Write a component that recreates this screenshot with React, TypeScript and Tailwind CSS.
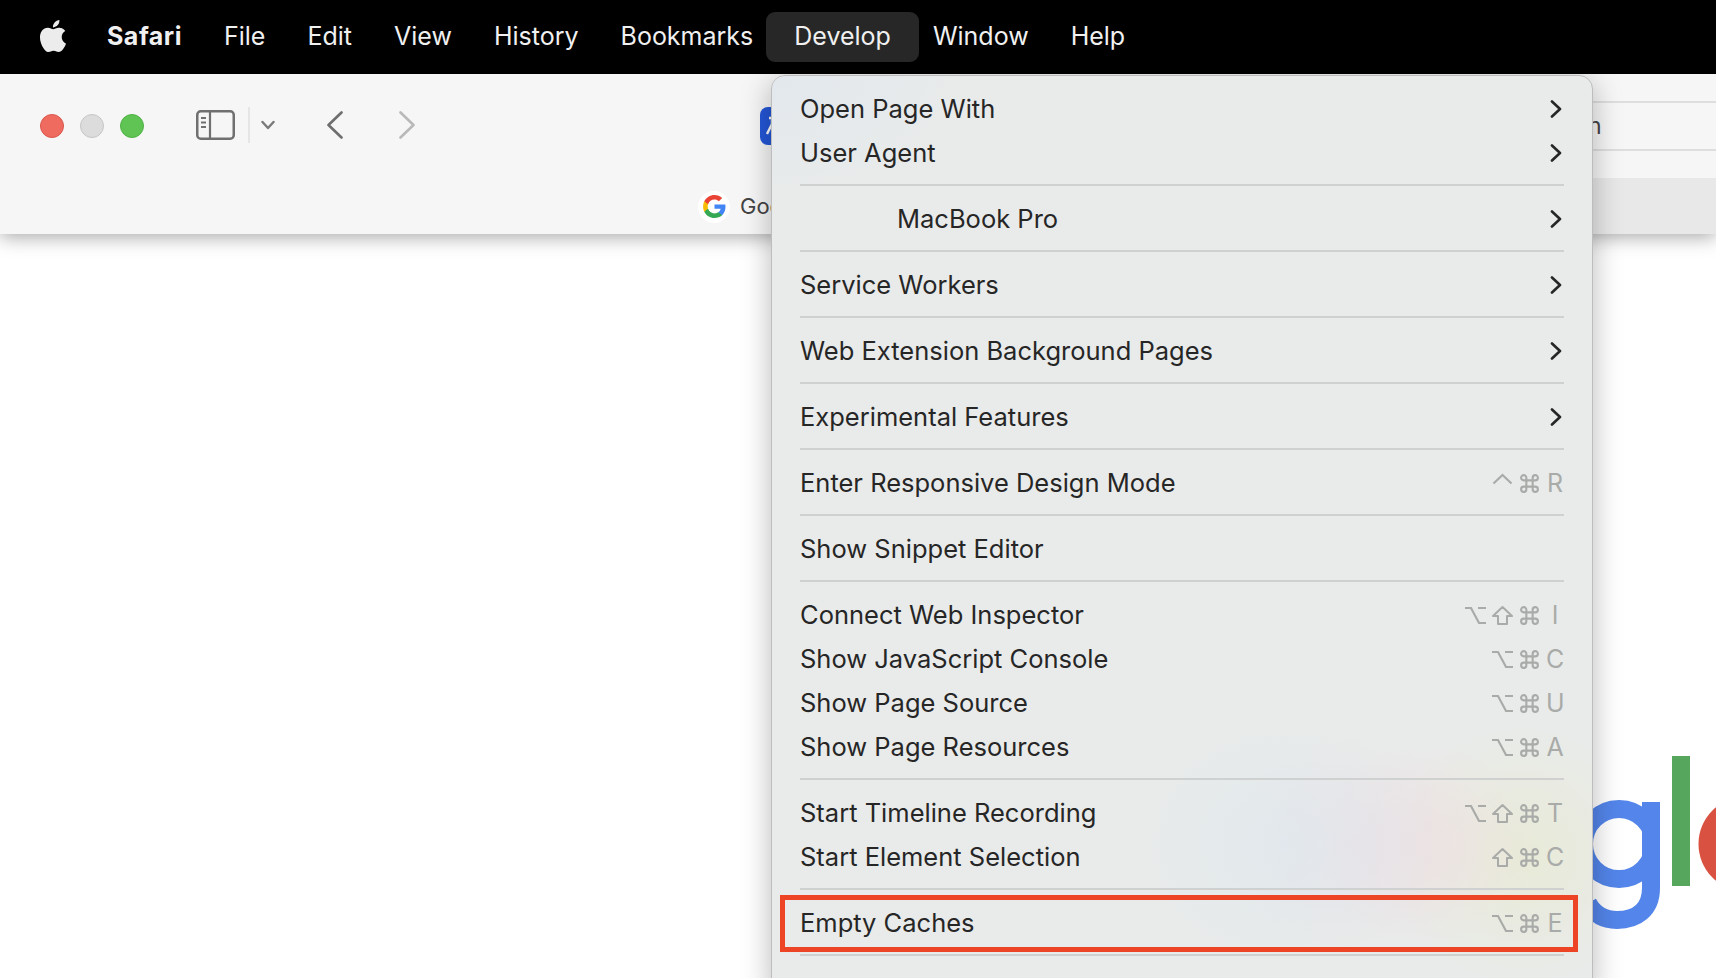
import React from "react";
import { SiApple } from "react-icons/si";

const Cmd = () => (
  <svg viewBox="0 0 20 20" className="w-[21px] h-[21px]" fill="none" stroke="currentColor" strokeWidth="2">
    <path d="M7 7H4.5A2.5 2.5 0 1 1 7 4.5V15.5A2.5 2.5 0 1 1 4.5 13H15.5A2.5 2.5 0 1 1 13 15.5V4.5A2.5 2.5 0 1 1 15.5 7H7Z" />
  </svg>
);
const Opt = () => (
  <svg viewBox="0 0 21 20" className="w-[21px] h-[21px]" fill="none" stroke="currentColor" strokeWidth="2.2">
    <path d="M0 2.5H6L14 17.5H21M13 2.5H21" />
  </svg>
);
const Shift = () => (
  <svg viewBox="0 0 21 20" className="w-[21px] h-[21px]" fill="none" stroke="currentColor" strokeWidth="2" strokeLinejoin="round">
    <path d="M10.5 1.5L20 10.5H15V18.5H6V10.5H1Z" />
  </svg>
);
const Ctrl = () => (
  <svg viewBox="0 0 21 20" className="w-[21px] h-[21px]" fill="none" stroke="currentColor" strokeWidth="2.2">
    <path d="M1.5 10L10.5 1.5L19.5 10" />
  </svg>
);
const Chevron = () => (
  <svg viewBox="0 0 12 18" className="w-[12px] h-[18px]" fill="none" stroke="#262626" strokeWidth="2.6" strokeLinecap="round" strokeLinejoin="round">
    <path d="M2 1.5L10 9L2 16.5" />
  </svg>
);

const ICONS: Record<string, () => React.ReactElement> = { c: Ctrl, o: Opt, s: Shift, m: Cmd };

type Row = { t: string; sub?: boolean; keys?: string; letter?: string; indent?: boolean; sep?: boolean };
const rows: Row[] = [
  { t: "Open Page With", sub: true },
  { t: "User Agent", sub: true },
  { t: "", sep: true },
  { t: "MacBook Pro", sub: true, indent: true },
  { t: "", sep: true },
  { t: "Service Workers", sub: true },
  { t: "", sep: true },
  { t: "Web Extension Background Pages", sub: true },
  { t: "", sep: true },
  { t: "Experimental Features", sub: true },
  { t: "", sep: true },
  { t: "Enter Responsive Design Mode", keys: "cm", letter: "R" },
  { t: "", sep: true },
  { t: "Show Snippet Editor" },
  { t: "", sep: true },
  { t: "Connect Web Inspector", keys: "osm", letter: "I" },
  { t: "Show JavaScript Console", keys: "om", letter: "C" },
  { t: "Show Page Source", keys: "om", letter: "U" },
  { t: "Show Page Resources", keys: "om", letter: "A" },
  { t: "", sep: true },
  { t: "Start Timeline Recording", keys: "osm", letter: "T" },
  { t: "Start Element Selection", keys: "sm", letter: "C" },
  { t: "", sep: true },
  { t: "Empty Caches", keys: "om", letter: "E" },
  { t: "", sep: true },
];

const bar = ["File", "Edit", "View", "History", "Bookmarks"];

function GoogleG() {
  return (
    <svg viewBox="0 0 24 24" className="w-[25px] h-[25px]">
      <path fill="#4285F4" d="M22.56 12.25c0-.78-.07-1.53-.2-2.25H12v4.26h5.92c-.26 1.37-1.04 2.53-2.21 3.31v2.77h3.57c2.08-1.92 3.28-4.74 3.28-8.09z" />
      <path fill="#34A853" d="M12 23c2.97 0 5.46-.98 7.28-2.66l-3.57-2.77c-.98.66-2.23 1.06-3.71 1.06-2.86 0-5.29-1.93-6.16-4.53H2.18v2.84C3.99 20.53 7.7 23 12 23z" />
      <path fill="#FBBC05" d="M5.84 14.09c-.22-.66-.35-1.36-.35-2.09s.13-1.43.35-2.09V7.07H2.18C1.43 8.55 1 10.22 1 12s.43 3.45 1.18 4.93l2.85-2.22.81-.62z" />
      <path fill="#EA4335" d="M12 5.38c1.62 0 3.06.56 4.21 1.64l3.15-3.15C17.45 2.09 14.97 1 12 1 7.7 1 3.99 3.47 2.18 7.07l3.66 2.84c.87-2.6 3.3-4.53 6.16-4.53z" />
    </svg>
  );
}

export default function App() {
  return (
    <div className="relative w-[1716px] h-[978px] overflow-hidden bg-white flex flex-col font-['Inter',sans-serif]">
      {/* macOS menu bar */}
      <div className="relative z-30 h-[74px] shrink-0 bg-black flex items-center text-[#f0f0f0] text-[25px]">
        <SiApple className="ml-[37px] w-[32px] h-[32px] mb-[2px] text-[#ececec]" />
        <span className="ml-[38px] font-bold tracking-[0.5px]">Safari</span>
        <div className="ml-[42px] flex gap-[42px]">
          {bar.map((b) => (
            <span key={b}>{b}</span>
          ))}
        </div>
        <div className="ml-[13px] h-[50px] px-[28px] rounded-[9px] bg-[#272727] flex items-center">Develop</div>
        <span className="ml-[14px]">Window</span>
        <span className="ml-[42px]">Help</span>
      </div>

      {/* Safari toolbar */}
      <div className="relative z-10 h-[160px] shrink-0 bg-[#f6f6f6] shadow-[0_3px_18px_rgba(0,0,0,0.35)] flex flex-col">
        <div className="h-[104px] flex items-center">
          <div className="ml-[40px] flex gap-[16px]">
            <div className="w-[24px] h-[24px] rounded-full bg-[#ef6b60] border border-[#d9564b]" />
            <div className="w-[24px] h-[24px] rounded-full bg-[#dcdcdc] border border-[#c6c6c6]" />
            <div className="w-[24px] h-[24px] rounded-full bg-[#5fc454] border border-[#4fb245]" />
          </div>
          <svg viewBox="0 0 39 30" className="ml-[52px] mb-[2px] w-[39px] h-[30px]" fill="none" stroke="#707070">
            <rect x="1.25" y="1.25" width="36.5" height="27.5" rx="3.5" strokeWidth="2.5" />
            <path d="M14 1.5V28.5" strokeWidth="2.2" />
            <path d="M5 8H10M5 12.5H10M5 17H10" strokeWidth="1.8" />
          </svg>
          <div className="ml-[13px] mb-[2px] w-[2px] h-[36px] bg-[#e6e6e6]" />
          <svg viewBox="0 0 14 10" className="ml-[11px] mb-[2px] w-[14px] h-[10px]" fill="none" stroke="#7a7a7a" strokeWidth="2.4" strokeLinecap="round" strokeLinejoin="round">
            <path d="M1.5 2L7 8L12.5 2" />
          </svg>
          <svg viewBox="0 0 16 28" className="ml-[52px] mb-[2px] w-[16px] h-[28px]" fill="none" stroke="#6e6e6e" strokeWidth="2.6" strokeLinecap="round" strokeLinejoin="round">
            <path d="M14.5 1.5L1.5 14L14.5 26.5" />
          </svg>
          <svg viewBox="0 0 16 28" className="ml-[56px] mb-[2px] w-[16px] h-[28px]" fill="none" stroke="#b9b9b9" strokeWidth="2.6" strokeLinecap="round" strokeLinejoin="round">
            <path d="M1.5 1.5L14.5 14L1.5 26.5" />
          </svg>
          <div className="ml-[345px] w-[30px] h-[38px] rounded-[8px] bg-[#2456d6] flex items-center justify-start">
            <svg viewBox="0 0 12 20" className="ml-[6px] w-[12px] h-[20px]" fill="none" stroke="#ffffff" strokeWidth="2.4">
              <path d="M3 2H9M6 2V8M6 8L1 18M6 12L10 18" />
            </svg>
          </div>
          <div className="ml-auto w-[170px] h-[50px] border-y-2 border-[#dedede] flex items-center pl-[42px] text-[23px] text-[#444444]">n</div>
        </div>
        <div className="flex-1 flex items-center relative">
          <div className="ml-[698px] mt-[1px] w-[32px] h-[32px] rounded-full bg-white flex items-center justify-center">
            <GoogleG />
          </div>
          <span className="ml-[10px] text-[22px] text-[#444444]">Google</span>
          <div className="ml-auto w-[170px] h-full bg-[#e8e8e8]" />
        </div>
      </div>

      {/* Page content: the Google logo, mostly behind the menu */}
      <svg viewBox="0 0 146 238" className="absolute left-[1570px] top-[740px] w-[146px] h-[238px]" fill="none">
        <defs>
          <clipPath id="bowl">
            <rect x="0" y="0" width="90" height="238" />
          </clipPath>
        </defs>
        <circle cx="49" cy="104" r="35" stroke="#5385ea" strokeWidth="18" clipPath="url(#bowl)" />
        <path d="M81 62V148C81 170 66 180 47 180C34 180 24 174 18 163" stroke="#5385ea" strokeWidth="18" />
        <rect x="102" y="16" width="18" height="130" fill="#57a65e" />
        <circle cx="176" cy="104" r="47.5" fill="#d95141" />
      </svg>

      {/* Develop menu */}
      <div className="absolute z-20 left-[771px] top-[75px] w-[822px] h-[920px] rounded-[14px] border border-[#bdbdbd] bg-[#e9ebea] shadow-[0_6px_30px_rgba(0,0,0,0.28)] overflow-hidden px-[28px] pt-[11px] text-[25.5px] text-[#262626]">
        <div className="absolute inset-0 bg-[radial-gradient(ellipse_200px_130px_at_0px_0px,rgba(222,230,240,0.6),transparent)]" />
        <div className="absolute left-[300px] top-[540px] w-[520px] h-[380px] bg-[radial-gradient(ellipse_150px_130px_at_210px_228px,rgba(222,232,238,0.7),transparent),radial-gradient(ellipse_130px_110px_at_285px_228px,rgba(234,224,230,0.8),transparent),radial-gradient(ellipse_110px_100px_at_355px_228px,rgba(238,226,224,0.8),transparent),radial-gradient(ellipse_130px_130px_at_450px_240px,rgba(232,234,214,0.95),transparent)]" />
        <div className="relative">
          {rows.map((r, i) =>
            r.sep ? (
              <div key={i} className="h-[22px] pb-[2px] flex items-center">
                <div className="w-full h-[2px] bg-[#cfd1d0]" />
              </div>
            ) : (
              <div key={i} className="h-[44px] flex items-center justify-between">
                <span className={r.indent ? "pl-[97px]" : ""}>{r.t}</span>
                {r.sub && (
                  <div className="mr-[2px]">
                    <Chevron />
                  </div>
                )}
                {r.keys && (
                  <div className="flex items-center gap-[6px] text-[#a9aba9]">
                    {r.keys.split("").map((k) => {
                      const I = ICONS[k];
                      return <I key={k} />;
                    })}
                    <span className="w-[18px] text-center text-[25px] leading-none">{r.letter}</span>
                  </div>
                )}
              </div>
            )
          )}
        </div>
        <div className="absolute left-[8px] top-[819px] w-[798px] h-[57px] border-[5px] border-[#ee4426]" />
      </div>
    </div>
  );
}
